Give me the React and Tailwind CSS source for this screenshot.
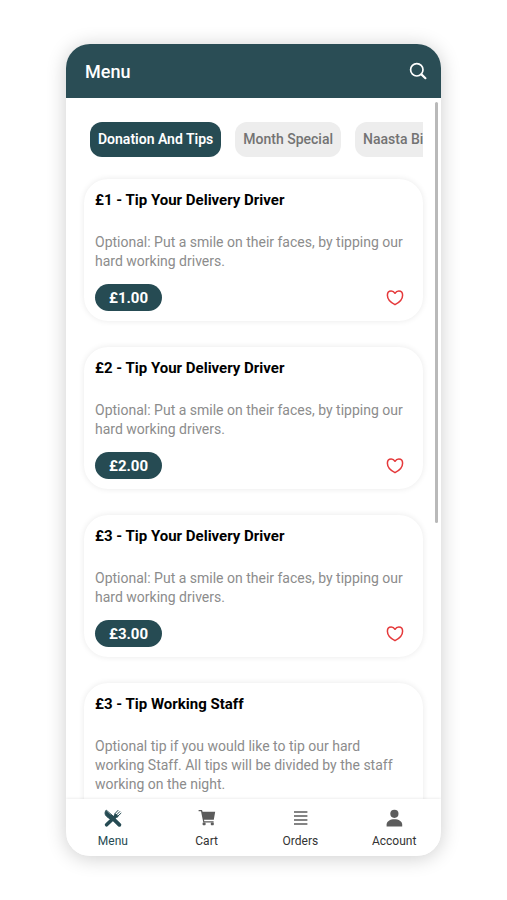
import { useState } from 'react'

const categories = ['Donation And Tips', 'Month Special', 'Naasta Bites']

const items = [
  { id: 1, title: '£1 - Tip Your Delivery Driver', text: 'Optional: Put a smile on their faces, by tipping our hard working drivers.', price: '£1.00' },
  { id: 2, title: '£2 - Tip Your Delivery Driver', text: 'Optional: Put a smile on their faces, by tipping our hard working drivers.', price: '£2.00' },
  { id: 3, title: '£3 - Tip Your Delivery Driver', text: 'Optional: Put a smile on their faces, by tipping our hard working drivers.', price: '£3.00' },
  { id: 4, title: '£3 - Tip Working Staff', text: 'Optional tip if you would like to tip our hard working Staff. All tips will be divided by the staff working on the night.', price: '£3.00' },
]

function SearchIcon() {
  return (
    <svg viewBox="0 0 18 18" className="h-[18px] w-[18px]" fill="none" stroke="currentColor">
      <circle cx="7.8" cy="7.8" r="6.2" strokeWidth="1.7" />
      <path d="M12.4 12.4 L16.4 16.2" strokeWidth="2.2" strokeLinecap="round" />
    </svg>
  )
}

function HeartIcon({ filled }) {
  return (
    <svg viewBox="0 0 18 18" className="h-[18px] w-[18px]" fill={filled ? 'currentColor' : 'none'} stroke="currentColor" strokeWidth="1.5" strokeLinejoin="round">
      <path d="M9 15.7 C6.4 14.4 1.4 10.8 1.4 6.3 C1.4 3.9 3 2.1 5.2 2.1 C6.9 2.1 8.2 3 9 4.3 C9.8 3 11.1 2.1 12.8 2.1 C15 2.1 16.6 3.9 16.6 6.3 C16.6 10.8 11.6 14.4 9 15.7 Z" />
    </svg>
  )
}

function MenuIcon() {
  return (
    <svg viewBox="0 0 20 20" className="h-5 w-5" fill="none" stroke="currentColor" strokeLinecap="round">
      {/* fork */}
      <path d="M3.6 16.8 L12.8 8" strokeWidth="3.6" />
      <path d="M12 5.6 L15 2.4 M13.6 6.8 L16.8 3.6 M14.8 8.2 L18 5.2" strokeWidth="1" />
      <path d="M12.2 6.4 C12.2 8 13 8.6 14.4 8.4" strokeWidth="2" />
      {/* knife */}
      <path d="M3 2.4 C1.4 4.4 1.8 6.8 3.8 8.6 L7 11 L9.8 8.4 Z" fill="currentColor" strokeWidth="1" />
      <path d="M8 8.6 L16.4 16.8" strokeWidth="3.8" />
    </svg>
  )
}

function CartIcon() {
  return (
    <svg viewBox="0 0 20 20" className="h-5 w-5" fill="currentColor">
      <path d="M1.6 2 H5 L5.6 3.8 H18.2 L16.8 11.8 H7 L7.3 13.2 H16.6 V14.4 H6.3 L4 3.3 H1.6 Z" />
      <rect x="5.6" y="14.4" width="3" height="2.8" rx="0.6" />
      <rect x="13.8" y="14.4" width="3" height="2.8" rx="0.6" />
    </svg>
  )
}

function OrdersIcon() {
  return (
    <svg viewBox="0 0 20 20" className="h-5 w-5" stroke="currentColor" strokeWidth="1.4">
      <path d="M4 4 H17.4 M4 8 H17.4 M4 12 H17.4 M4 16 H17.4" />
    </svg>
  )
}

function AccountIcon() {
  return (
    <svg viewBox="0 0 20 20" className="h-5 w-5" fill="currentColor">
      <circle cx="10.4" cy="5.8" r="4.1" />
      <path d="M2.6 18.4 V16.6 C2.6 13.2 6.2 11.2 10.4 11.2 C14.6 11.2 18.2 13.2 18.2 16.6 V18.4 Z" />
    </svg>
  )
}

const tabs = [
  { name: 'Menu', icon: <MenuIcon /> },
  { name: 'Cart', icon: <CartIcon /> },
  { name: 'Orders', icon: <OrdersIcon /> },
  { name: 'Account', icon: <AccountIcon /> },
]

function ItemCard({ item }) {
  const [liked, setLiked] = useState(false)

  return (
    <article className="rounded-3xl bg-white px-[11px] pt-[9px] pb-[10px] shadow-[0_0_6px_rgba(0,0,0,0.09)]">
      <h2 className="text-[15px] leading-6 font-bold text-black">{item.title}</h2>
      <p className="mt-[21px] pr-2 text-[14px] leading-[19px] text-[#8c8c8c]">{item.text}</p>
      <div className="mt-[13px] flex items-center justify-between pr-2">
        <span className="rounded-full bg-[#264b53] px-3.5 pt-px text-[15px] leading-[26px] font-bold text-white">{item.price}</span>
        <button type="button" aria-label="Add to favourites" aria-pressed={liked} onClick={() => setLiked(!liked)} className="text-[#e5393b]">
          <HeartIcon filled={liked} />
        </button>
      </div>
    </article>
  )
}

function App() {
  const [category, setCategory] = useState(categories[0])
  const [tab, setTab] = useState('Menu')

  return (
    <div className="flex h-screen flex-col bg-white px-[66px] py-11 font-[Roboto,sans-serif]">
      <div className="flex min-h-0 flex-1 flex-col overflow-hidden rounded-[24px] bg-white shadow-[0_2px_20px_rgba(0,0,0,0.2)]">
        <header className="flex h-[54px] shrink-0 items-center justify-between bg-[#2a4d55] pr-3.5 pl-[19px] text-white">
          <h1 className="text-[18px] font-medium">Menu</h1>
          <button type="button" aria-label="Search">
            <SearchIcon />
          </button>
        </header>

        <main className="relative min-h-0 flex-1">
          <div className="h-full overflow-y-auto px-[18px] pt-6 [scrollbar-width:none]">
            <div className="flex gap-3.5 overflow-x-auto pl-1.5 [scrollbar-width:none]">
              {categories.map((name) => (
                <button
                  key={name}
                  type="button"
                  onClick={() => setCategory(name)}
                  className={`shrink-0 rounded-xl px-2 text-[14px] leading-[35px] ${name === category ? 'bg-[#264b53] font-semibold text-white' : 'bg-[#ededed] font-medium text-[#737373]'}`}
                >
                  {name}
                </button>
              ))}
            </div>

            <div className="mt-[22px] flex flex-col gap-[26px] pb-6">
              {items.map((item) => (
                <ItemCard key={item.id} item={item} />
              ))}
            </div>
          </div>
          {/* scroll thumb */}
          <div className="pointer-events-none absolute top-1 right-[3px] h-3/5 w-[3px] rounded-full bg-[#b9b9b9]" />
        </main>

        <nav className="z-10 grid h-[57px] shrink-0 grid-cols-4 bg-white shadow-[0_0_3px_rgba(0,0,0,0.12)]">
          {tabs.map(({ name, icon }) => (
            <button
              key={name}
              type="button"
              onClick={() => setTab(name)}
              className={`flex flex-col items-center gap-1 pt-[9px] text-[12px] leading-[18px] ${name === tab ? 'text-[#264b53]' : 'text-[#5c5c5c]'}`}
            >
              {icon}
              <span className={name === tab ? '' : 'text-[#333333]'}>{name}</span>
            </button>
          ))}
        </nav>
      </div>
    </div>
  )
}

export default App
